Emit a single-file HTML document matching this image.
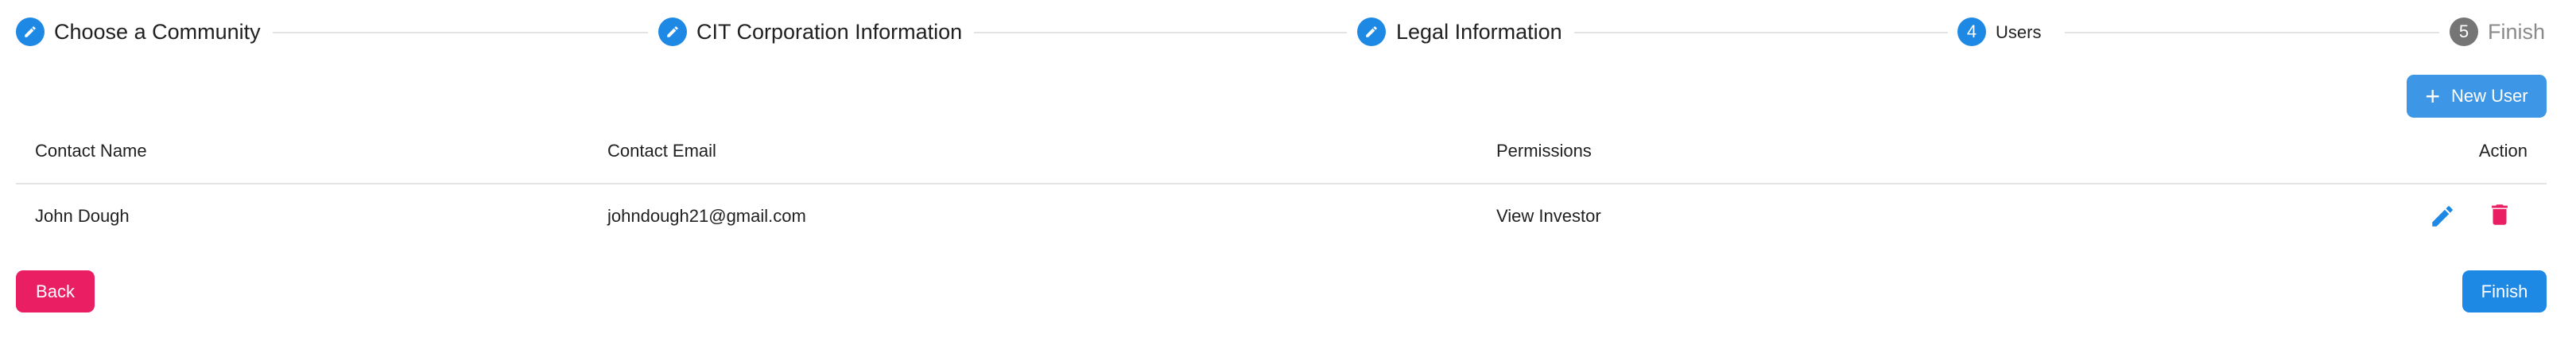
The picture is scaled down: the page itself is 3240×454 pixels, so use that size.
<!DOCTYPE html>
<html><head><meta charset="utf-8"><style>
*{margin:0;padding:0;box-sizing:border-box}
body{width:3240px;height:454px;background:#fff;font-family:"Liberation Sans",sans-serif;color:#212121;position:relative;overflow:hidden}
.a{position:absolute;white-space:nowrap}
.c{position:absolute;width:36px;height:36px;border-radius:50%;top:22px;background:#1e88e5;color:#fff;font-size:22px;display:flex;align-items:center;justify-content:center}
.st{top:24px;font-size:27px;line-height:32px}
.ln{position:absolute;top:40px;height:2px;background:#e3e3e3}
.t{font-size:22px;line-height:26px}
.btn{position:absolute;border-radius:9px;color:#fff;font-size:22px;display:flex;align-items:center;justify-content:center}
</style></head><body>
<div class="c" style="left:20px"><svg width="18" height="18" viewBox="0 0 24 24"><path fill="#fff" d="M3 17.25V21h3.75L17.81 9.94l-3.75-3.75L3 17.25zM20.71 7.04a1 1 0 000-1.41l-2.34-2.34a1 1 0 00-1.41 0l-1.83 1.83 3.75 3.75 1.83-1.83z"/></svg></div>
<div class="a st" style="left:68px">Choose a Community</div>
<div class="ln" style="left:343px;width:472px"></div>
<div class="c" style="left:828px"><svg width="18" height="18" viewBox="0 0 24 24"><path fill="#fff" d="M3 17.25V21h3.75L17.81 9.94l-3.75-3.75L3 17.25zM20.71 7.04a1 1 0 000-1.41l-2.34-2.34a1 1 0 00-1.41 0l-1.83 1.83 3.75 3.75 1.83-1.83z"/></svg></div>
<div class="a st" style="left:876px">CIT Corporation Information</div>
<div class="ln" style="left:1225px;width:469px"></div>
<div class="c" style="left:1707px"><svg width="18" height="18" viewBox="0 0 24 24"><path fill="#fff" d="M3 17.25V21h3.75L17.81 9.94l-3.75-3.75L3 17.25zM20.71 7.04a1 1 0 000-1.41l-2.34-2.34a1 1 0 00-1.41 0l-1.83 1.83 3.75 3.75 1.83-1.83z"/></svg></div>
<div class="a st" style="left:1756px">Legal Information</div>
<div class="ln" style="left:1980px;width:470px"></div>
<div class="c" style="left:2462px">4</div>
<div class="a t" style="left:2510px;top:28px">Users</div>
<div class="ln" style="left:2597px;width:471px"></div>
<div class="c" style="left:3081px;background:#757575">5</div>
<div class="a st" style="left:3129px;color:#8a8a8a">Finish</div>
<div class="btn" style="left:3027px;top:94px;width:176px;height:54px;background:#3d96e6"><span style="font-size:32px;margin-right:14px;line-height:26px">+</span>New User</div>
<div class="a t" style="left:44px;top:177px">Contact Name</div>
<div class="a t" style="left:764px;top:177px">Contact Email</div>
<div class="a t" style="left:1882px;top:177px">Permissions</div>
<div class="a t" style="right:61px;top:177px">Action</div>
<div class="a" style="left:20px;top:230px;width:3183px;height:2px;background:#e3e3e3"></div>
<div class="a t" style="left:44px;top:259px">John Dough</div>
<div class="a t" style="left:764px;top:259px">johndough21@gmail.com</div>
<div class="a t" style="left:1882px;top:259px">View Investor</div>
<svg class="a" style="left:3055px;top:255px" width="34" height="34" viewBox="0 0 24 24"><path fill="#1e88e5" d="M3 17.25V21h3.75L17.81 9.94l-3.75-3.75L3 17.25zM20.71 7.04a1 1 0 000-1.41l-2.34-2.34a1 1 0 00-1.41 0l-1.83 1.83 3.75 3.75 1.83-1.83z"/></svg>
<svg class="a" style="left:3127px;top:253px" width="34" height="34" viewBox="0 0 24 24"><path fill="#e91e63" d="M6 19c0 1.1.9 2 2 2h8c1.1 0 2-.9 2-2V7H6v12zM19 4h-3.5l-1-1h-5l-1 1H5v2h14V4z"/></svg>
<div class="btn" style="left:20px;top:340px;width:99px;height:53px;background:#e91e63">Back</div>
<div class="btn" style="left:3097px;top:340px;width:106px;height:53px;background:#1e88e5">Finish</div>
</body></html>
